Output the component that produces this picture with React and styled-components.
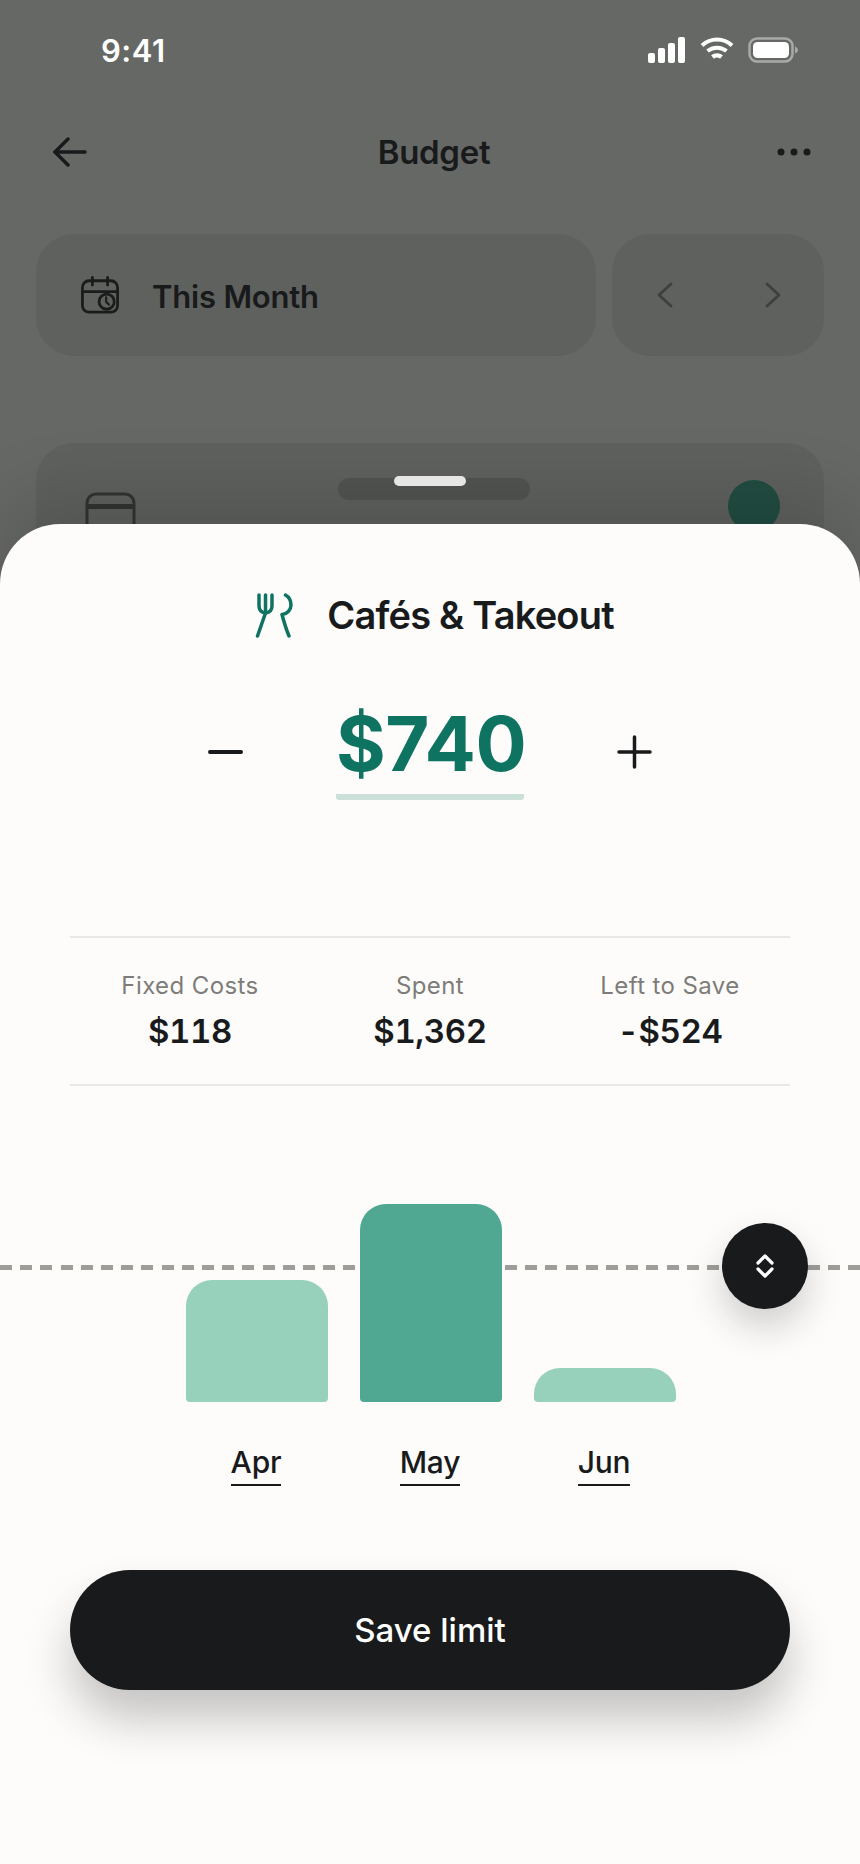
import React from 'react'
import styled, { createGlobalStyle } from 'styled-components'

const GlobalStyle = createGlobalStyle`
  html, body { margin: 0; padding: 0; background: #666865; }
  * { box-sizing: border-box; }
  body { font-family: Inter, "Liberation Sans", sans-serif; }
`

const stats = [
  { label: 'Fixed Costs', value: '$118' },
  { label: 'Spent', value: '$1,362' },
  { label: 'Left to Save', value: '-$524' },
]

const months = [
  { name: 'Apr', height: 122 },
  { name: 'May', height: 198, active: true },
  { name: 'Jun', height: 34 },
]

function SignalIcon() {
  return (
    <svg width="38" height="26" viewBox="0 0 38 26" fill="#fff">
      <rect x="0" y="16" width="7" height="10" rx="2" />
      <rect x="10" y="11" width="7" height="15" rx="2" />
      <rect x="20" y="6" width="7" height="20" rx="2" />
      <rect x="30" y="0" width="7" height="26" rx="2" />
    </svg>
  )
}

function WifiIcon() {
  return (
    <svg width="34" height="24" viewBox="0 0 34 24" fill="none" stroke="#fff" strokeWidth="4" strokeLinecap="butt">
      <path d="M2 8.5C10.5 0.5 23.5 0.5 32 8.5" />
      <path d="M7.5 14C13 9.5 21 9.5 26.5 14" />
      <path d="M12.5 20C15 18 19 18 21.500 20" strokeWidth="4.500" />
    </svg>
  )
}

function BatteryIcon() {
  return (
    <svg width="50" height="26" viewBox="0 0 50 26">
      <rect x="1.500" y="1.500" width="43" height="23" rx="7.500" fill="none" stroke="#a9aaa8" strokeWidth="2.500" />
      <rect x="5" y="5" width="36" height="16" rx="4.500" fill="#fff" />
      <path d="M47 9.500C49 10.500 50 11.500 50 13C50 14.500 49 15.500 47 16.500Z" fill="#a9aaa8" />
    </svg>
  )
}

function BackIcon() {
  return (
    <svg width="34" height="30" viewBox="0 0 34 30" fill="none" stroke="#181a1b" strokeWidth="3.500" strokeLinecap="round" strokeLinejoin="round">
      <path d="M32 15H2" />
      <path d="M15 2L2 15L15 28" />
    </svg>
  )
}

function DotsIcon() {
  return (
    <svg width="34" height="8" viewBox="0 0 34 8" fill="#181a1b">
      <circle cx="4" cy="4" r="3.500" />
      <circle cx="17" cy="4" r="3.500" />
      <circle cx="30" cy="4" r="3.500" />
    </svg>
  )
}

function CalendarIcon() {
  return (
    <svg width="38" height="38" viewBox="0 0 40 40" fill="none" stroke="#1a1c1b" strokeWidth="2.900" strokeLinecap="round">
      <rect x="1.500" y="5" width="37" height="33" rx="7" />
      <path d="M1.500 16.500H38.500" />
      <path d="M12 1.500V9.500M28 1.500V9.500" />
      <circle cx="27" cy="27" r="8" />
      <path d="M26.500 22.500V27.500L29.500 30" strokeWidth="2.200" />
    </svg>
  )
}

function Chevron({ right }) {
  return (
    <svg width="16" height="26" viewBox="0 0 16 26" fill="none" stroke="#3e403e" strokeWidth="2.800" strokeLinecap="round" strokeLinejoin="round">
      <path d={right ? 'M2 2L14 13L2 24' : 'M14 2L2 13L14 24'} />
    </svg>
  )
}

function CutleryIcon() {
  return (
    <svg width="38" height="46" viewBox="0 0 38 46" fill="none" stroke="#0f7362" strokeWidth="3.500" strokeLinecap="round" strokeLinejoin="round">
      <path d="M4 3V14C4 18 6.500 20.500 10.500 21C14.500 20.500 17 18 17 14V3" />
      <path d="M10.500 3V21" />
      <path d="M10.500 21L2.500 44" />
      <path d="M30.500 3C34 5 36 9 36 13C36 18 32 22 27 22.500C29 30 31.500 38 34 44" />
    </svg>
  )
}

function UpDownIcon() {
  return (
    <svg width="18" height="24" viewBox="0 0 18 24" fill="none" stroke="#fff" strokeWidth="3.200" strokeLinecap="round" strokeLinejoin="round">
      <path d="M2 9L9 2L16 9" />
      <path d="M2 15L9 22L16 15" />
    </svg>
  )
}

function MinusIcon() {
  return (
    <svg width="35" height="34" viewBox="0 0 35 34" fill="none" stroke="#181a1b" strokeWidth="4" strokeLinecap="round">
      <path d="M2 17H33" />
    </svg>
  )
}

function PlusIcon() {
  return (
    <svg width="35" height="34" viewBox="0 0 35 34" fill="none" stroke="#181a1b" strokeWidth="3.500" strokeLinecap="round">
      <path d="M2 17H33M17.500 2V32" />
    </svg>
  )
}

function CardIcon() {
  return (
    <svg width="50" height="40" viewBox="0 0 50 40" fill="none" stroke="#323432" strokeWidth="3">
      <rect x="2" y="2" width="47" height="40" rx="9" />
      <path d="M2 14.500H49" strokeWidth="5" />
    </svg>
  )
}

export default function App() {
  return (
    <>
      <GlobalStyle />
      <Page>
        <StatusBar>
          <Time>9:41</Time>
          <StatusIcons>
            <SignalIcon />
            <WifiIcon />
            <BatteryIcon />
          </StatusIcons>
        </StatusBar>

        <Header>
          <BackIcon />
          <HeaderTitle>Budget</HeaderTitle>
          <DotsIcon />
        </Header>

        <PeriodRow>
          <PeriodCard>
            <CalendarIcon />
            <PeriodText>This Month</PeriodText>
          </PeriodCard>
          <PagerCard>
            <Chevron />
            <Chevron right />
          </PagerCard>
        </PeriodRow>

        <BudgetCard>
          <CardIcon />
          <SkeletonBar />
          <GreenDot />
        </BudgetCard>

        <Sheet>
          <Grabber />

          <SheetTitle>
            <CutleryIcon />
            <TitleText>Cafés &amp; Takeout</TitleText>
          </SheetTitle>

          <Stepper>
            <StepButton><MinusIcon /></StepButton>
            <Amount>$740</Amount>
            <StepButton><PlusIcon /></StepButton>
          </Stepper>

          <StatsRow>
            {stats.map((s) => (
              <Stat key={s.label}>
                <StatLabel>{s.label}</StatLabel>
                <StatValue>{s.value}</StatValue>
              </Stat>
            ))}
          </StatsRow>

          <Chart>
            <LimitLine />
            <LimitHandle><UpDownIcon /></LimitHandle>
            <BarRow>
              {months.map((m) => (
                <Column key={m.name}>
                  <Bar $height={m.height} $active={m.active} />
                  <MonthLabel>{m.name}</MonthLabel>
                </Column>
              ))}
            </BarRow>
          </Chart>

          <SaveButton>Save limit</SaveButton>
        </Sheet>
      </Page>
    </>
  )
}

const Page = styled.div`
  position: relative;
  width: 860px;
  height: 1864px;
  overflow: hidden;
  background: #666865;
`

const StatusBar = styled.div`
  display: flex;
  justify-content: space-between;
  align-items: center;
  height: 26px;
  margin-top: 37px;
  padding: 0 62px 0 101px;
`

const Time = styled.div`
  color: #fff;
  font-size: 31px;
  font-weight: 600;
  letter-spacing: 0.5px;
`

const StatusIcons = styled.div`
  display: flex;
  align-items: flex-start;
  gap: 14px;
`

const Header = styled.div`
  display: flex;
  justify-content: space-between;
  align-items: center;
  height: 40px;
  margin-top: 69px;
  padding: 0 49px 0 53px;
`

const HeaderTitle = styled.div`
  margin-left: 4px;
  color: #181a1b;
  font-size: 33px;
  font-weight: 600;
  letter-spacing: -0.3px;
`

const PeriodRow = styled.div`
  display: flex;
  gap: 16px;
  margin-top: 62px;
  padding: 0 36px;
`

const PeriodCard = styled.div`
  display: flex;
  align-items: center;
  gap: 33px;
  width: 560px;
  height: 122px;
  padding-left: 45px;
  background: #5f615e;
  border-radius: 38px;
`

const PeriodText = styled.div`
  margin-top: 2px;
  color: #181a1b;
  font-size: 31px;
  font-weight: 600;
  letter-spacing: -0.2px;
`

const PagerCard = styled.div`
  display: flex;
  align-items: center;
  justify-content: space-between;
  width: 212px;
  height: 122px;
  padding: 0 43px 0 45px;
  background: #5f615e;
  border-radius: 38px;
`

const BudgetCard = styled.div`
  display: flex;
  justify-content: space-between;
  align-items: flex-start;
  height: 260px;
  margin: 87px 36px 0;
  padding: 35px 44px 0 49px;
  background: #5f615e;
  border-radius: 38px;

  svg {
    margin-top: 14px;
    overflow: visible;
  }
`

const SkeletonBar = styled.div`
  width: 192px;
  height: 22px;
  margin-left: 4px;
  background: #525452;
  border-radius: 11px;
`

const GreenDot = styled.div`
  width: 52px;
  height: 52px;
  margin-top: 2px;
  background: #224d42;
  border-radius: 50%;
`

const Sheet = styled.div`
  position: absolute;
  left: 0;
  right: 0;
  top: 524px;
  bottom: 0;
  padding-top: 68px;
  background: #fdfcfb;
  border-radius: 60px 60px 0 0;
  box-shadow: 0 -30px 70px rgba(0, 0, 0, 0.13);
`

const Grabber = styled.div`
  position: absolute;
  top: -48px;
  left: 394px;
  width: 72px;
  height: 10px;
  background: #e6e6e5;
  border-radius: 5px;
`

const SheetTitle = styled.div`
  display: flex;
  align-items: center;
  justify-content: center;
  gap: 34px;
  height: 46px;
  padding-left: 9px;
`

const TitleText = styled.div`
  color: #181a1b;
  font-size: 38px;
  font-weight: 600;
  letter-spacing: -0.8px;
`

const Stepper = styled.div`
  display: flex;
  justify-content: center;
  align-items: flex-start;
  gap: 93px;
  margin-top: 54px;
`

const StepButton = styled.div`
  display: flex;
  margin-top: 43px;
`

const Amount = styled.div`
  width: 188px;
  height: 108px;
  color: #0f7362;
  font-size: 76px;
  font-weight: 700;
  line-height: 102px;
  text-align: center;
  letter-spacing: -0.5px;
  border-bottom: 6px solid #cbe0d9;
  border-radius: 0 0 3px 3px;
`

const StatsRow = styled.div`
  display: grid;
  grid-template-columns: repeat(3, 1fr);
  height: 150px;
  margin: 136px 70px 0;
  padding-top: 34px;
  border-top: 2px solid #e9e8e6;
  border-bottom: 2px solid #e9e8e6;
`

const Stat = styled.div`
  display: flex;
  flex-direction: column;
  align-items: center;
  gap: 11px;
`

const StatLabel = styled.div`
  color: #7d7c79;
  font-size: 24px;
  font-weight: 400;
  line-height: 28px;
  letter-spacing: 0.4px;
`

const StatValue = styled.div`
  color: #181a1b;
  font-size: 33px;
  font-weight: 600;
  line-height: 40px;
  letter-spacing: -0.4px;
  font-variant-numeric: tabular-nums;
`

const Chart = styled.div`
  position: relative;
  margin-top: 118px;
`

const LimitLine = styled.div`
  position: absolute;
  top: 61px;
  left: 0;
  right: 0;
  height: 5px;
  background: repeating-linear-gradient(90deg, #9e9d9a 0 12px, transparent 12px 20.2px);
`

const LimitHandle = styled.div`
  position: absolute;
  top: 19px;
  left: 722px;
  z-index: 2;
  display: flex;
  align-items: center;
  justify-content: center;
  width: 86px;
  height: 86px;
  background: #181a1b;
  border-radius: 50%;
  box-shadow: 0 18px 36px rgba(24, 26, 27, 0.2);
`

const BarRow = styled.div`
  position: relative;
  display: flex;
  justify-content: center;
  align-items: flex-end;
  gap: 32px;
  padding-left: 2px;
`

const Column = styled.div`
  display: flex;
  flex-direction: column;
  align-items: center;
  width: 142px;
`

const Bar = styled.div`
  width: 142px;
  height: ${(p) => p.$height}px;
  background: ${(p) => (p.$active ? '#50a892' : '#97d1bb')};
  border-radius: 26px 26px 4px 4px;
  box-shadow: ${(p) => (p.$active ? '0 0 0 2px #fdfcfb' : 'none')};
`

const MonthLabel = styled.div`
  margin: 43px 2px 0 0;
  padding-bottom: 5px;
  color: #181a1b;
  font-size: 30px;
  font-weight: 500;
  line-height: 34px;
  letter-spacing: -0.2px;
  border-bottom: 2px solid #181a1b;
`

const SaveButton = styled.div`
  display: flex;
  align-items: center;
  justify-content: center;
  height: 120px;
  margin: 84px 70px 0;
  color: #fff;
  font-size: 33px;
  font-weight: 500;
  background: #181a1b;
  border-radius: 60px;
  box-shadow: 0 30px 45px rgba(24, 26, 27, 0.24);
`
